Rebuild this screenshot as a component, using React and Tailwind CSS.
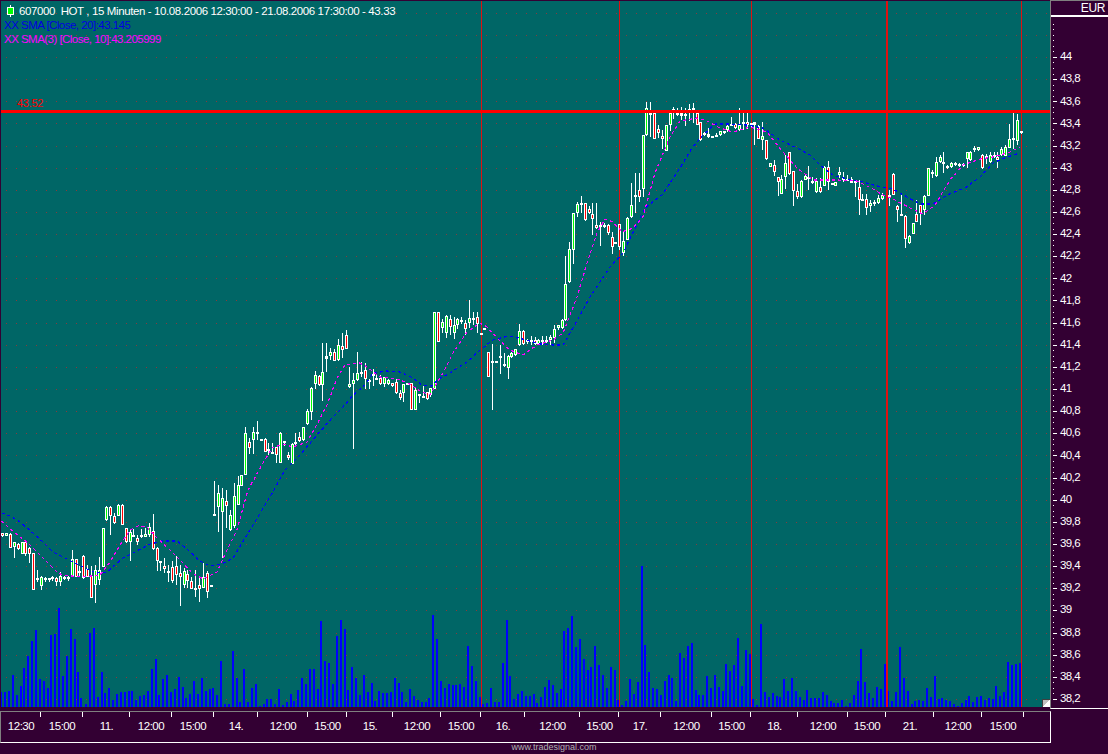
const CANDLE_SETS = [
  { x0: 0, y0: 490, items: [
    [7,128,130,137,142,'r'],[19,128,130,137,137,'g'],[31,130,132,173,173,'r'],[43,155,157,170,204,'g'],[55,160,163,177,180,'r'],[67,155,157,191,191,'g'],[76,155,157,191,198,'r'],[88,170,173,191,219,'r'],[100,190,190,301,301,'r'],[112,240,264,268,275,'w'],[124,257,261,288,300,'g'],[136,262,265,270,275,'w'],[148,263,265,270,276,'w'],[157,258,262,268,272,'w'],[169,262,265,275,288,'r'],[181,245,258,276,288,'g'],[193,258,260,264,270,'w'],[205,258,260,266,273,'g'],[217,180,208,260,262,'g'],[229,208,208,260,262,'r'],[238,228,243,245,258,'w'],[250,195,197,263,268,'r'],[262,225,238,260,262,'r'],[274,228,258,325,325,'r'],[286,225,241,284,338,'g'],[298,200,241,270,285,'g'],[310,115,115,230,232,'g'],[319,47,50,91,92,'g'],[331,47,50,79,135,'r'],[343,70,79,100,102,'r'],[355,42,44,77,77,'g'],[367,42,44,106,106,'r'],[379,113,115,157,160,'r'],[391,120,126,157,212,'g'],[400,117,135,139,142,'w'],[412,135,145,155,165,'r'],[424,117,135,142,145,'g'],[436,115,132,140,142,'g'],[448,100,110,135,140,'g'],[460,72,122,177,180,'r'],[472,172,175,212,242,'r'],[481,212,213,215,242,'w'],[493,205,229,238,248,'r'],[505,225,243,248,275,'w'],[517,212,232,272,280,'r'],[529,198,229,254,285,'r'],[541,225,250,262,347,'r'],[553,235,244,284,295,'g'],[562,240,252,274,295,'r'],[574,262,274,296,298,'r'],[586,240,294,299,320,'w'],[598,265,284,296,335,'r'],[610,220,262,293,295,'g'],[622,243,250,307,325,'r'],[634,285,285,287,287,'w'],[643,-28,72,73,73,'w'],[655,-15,8,50,125,'g'],[667,-5,25,65,205,'g'],[679,0,33,47,113,'r'],[691,60,75,120,122,'g'],[703,-21,18,107,113,'g'],
  ]},
  { x0: 200, y0: 320, items: [
    [115,467,495,555,555,'g'],[125,466,466,497,497,'g'],[137,322,340,466,466,'g'],[149,355,367,383,402,'r'],[160,322,337,359,402,'g'],[172,304,337,340,360,'w'],[184,358,358,364,364,'w'],[196,355,358,395,395,'r'],[205,370,388,390,405,'w'],[217,370,395,397,397,'w'],[229,380,382,404,428,'r'],[241,337,340,428,430,'g'],[253,362,362,370,378,'r'],[265,397,405,413,420,'r'],[277,370,372,433,433,'g'],[286,340,367,373,375,'g'],[298,337,352,362,365,'r'],[310,320,322,361,363,'g'],[322,268,273,312,316,'g'],[334,200,205,275,300,'g'],[346,153,165,191,208,'g'],[358,165,167,196,198,'r'],[367,70,157,196,242,'g'],[379,70,108,116,157,'w'],[391,85,97,107,120,'g'],[403,88,97,122,123,'r'],[415,58,76,121,123,'g'],[427,40,79,91,115,'r'],[439,30,44,88,88,'r'],[448,140,193,202,205,'g'],[460,160,179,191,386,'g'],[472,97,160,181,183,'g'],[484,127,155,158,170,'w'],[496,130,149,178,206,'r'],[508,178,180,182,206,'w'],[520,148,163,166,197,'w'],[529,163,175,177,178,'w'],[541,165,175,193,195,'r'],[553,170,172,193,200,'g'],[565,178,181,191,195,'g'],[577,188,190,199,200,'r'],[589,178,187,220,222,'r'],[601,210,220,233,240,'r'],[610,192,193,218,245,'g'],[622,190,190,193,195,'w'],[634,190,190,271,271,'r'],[646,200,211,271,271,'g'],[658,222,223,226,250,'w'],[670,197,229,232,235,'w'],[682,215,217,238,239,'r'],[691,205,205,221,225,'g'],
  ]},
  { x0: 430, y0: 190, items: [
    [2,595,595,615,620,'g'],[12,365,367,597,597,'g'],[25,365,367,457,457,'r'],[37,388,396,415,428,'g'],[49,376,378,428,445,'g'],[61,376,386,412,435,'r'],[73,382,404,430,448,'g'],[82,384,387,404,418,'g'],[94,382,391,397,403,'r'],[106,390,398,418,435,'r'],[118,330,385,399,413,'g'],[130,366,384,387,406,'w'],[142,366,382,402,428,'r'],[154,428,430,430,430,'w'],[163,415,415,415,415,'w'],[175,485,485,561,561,'r'],[187,462,513,515,660,'w'],[199,512,512,514,514,'w'],[211,465,497,501,551,'g'],[223,490,523,528,530,'r'],[235,495,497,535,566,'g'],[244,487,488,500,503,'g'],[256,478,478,494,497,'g'],[268,402,422,466,468,'g'],[280,420,422,462,465,'r'],[292,448,450,452,463,'w'],[304,438,450,452,465,'w'],[316,440,449,463,465,'r'],[325,448,450,461,463,'g'],[337,438,449,454,465,'r'],[349,438,449,451,458,'w'],[361,435,440,451,465,'g'],[373,405,416,444,460,'g'],[385,405,406,415,420,'g'],[397,387,389,415,416,'g'],[406,198,283,391,392,'g'],[418,157,176,277,278,'g'],[430,70,70,181,222,'g'],[442,35,41,70,82,'g'],[454,18,40,41,70,'w'],[466,38,40,91,92,'r'],[478,48,58,70,72,'r'],[487,40,73,88,135,'r'],[499,40,104,113,116,'r'],[511,95,105,111,167,'r'],[523,98,104,105,115,'w'],[535,103,104,130,136,'r'],[547,125,140,170,191,'r'],[556,155,157,157,157,'w'],[568,103,103,170,180,'r'],[580,125,154,188,198,'g'],[592,80,83,150,150,'g'],
  ]},
  { x0: 620, y0: 90, items: [
    [33,280,345,382,385,'g'],[46,250,314,318,368,'w'],[58,250,300,320,337,'r'],[70,135,135,297,320,'g'],[79,35,55,135,137,'g'],[91,35,60,75,140,'w'],[103,60,70,148,148,'r'],[115,105,118,130,145,'r'],[127,120,137,148,177,'r'],[139,105,105,182,182,'g'],[151,60,68,105,122,'g'],[160,50,58,70,87,'w'],[172,55,68,75,78,'w'],[184,50,70,78,90,'w'],[196,55,72,77,108,'w'],[208,42,58,70,92,'w'],[220,38,55,70,100,'w'],[232,70,70,104,104,'r'],[241,97,97,151,152,'r'],[253,125,128,133,137,'w'],[265,115,133,140,143,'w'],[277,137,137,139,139,'w'],[289,130,135,137,140,'w'],[301,122,124,136,137,'g'],[313,122,124,124,132,'w'],[322,100,107,120,125,'g'],[334,80,103,105,105,'w'],[346,100,103,115,118,'r'],[358,55,106,120,123,'g'],[370,70,97,103,120,'w'],[382,70,96,105,118,'r'],[394,100,100,104,115,'w'],[403,95,97,105,165,'w'],[415,105,107,146,147,'r'],[427,97,139,151,180,'g'],[439,150,150,208,210,'r'],[451,218,220,230,232,'g'],[463,210,226,245,258,'r'],[475,262,262,275,318,'r'],[484,255,266,311,313,'g'],[496,195,219,262,298,'g'],[508,185,187,253,255,'r'],[520,243,243,304,347,'r'],[532,283,304,322,327,'r'],[544,270,272,320,325,'g'],[556,252,259,269,270,'g'],[565,228,262,264,300,'w'],[577,262,272,280,283,'r'],[589,265,272,307,309,'g'],[601,265,291,306,310,'r'],[613,228,230,287,288,'g'],[625,212,230,276,300,'r'],[637,278,280,282,284,'w'],[646,275,277,287,288,'g'],[658,232,246,254,263,'g'],
  ]},
  { x0: 820, y0: 100, items: [
    [70,215,233,235,245,'w'],[82,225,237,240,240,'w'],[94,230,236,248,250,'w'],[106,240,242,248,292,'w'],[118,240,262,300,345,'r'],[127,282,296,300,300,'r'],[139,282,298,323,345,'r'],[151,300,310,318,335,'g'],[163,300,305,307,318,'w'],[175,285,295,308,312,'g'],[187,280,285,296,300,'g'],[208,270,284,286,318,'w'],[220,220,222,284,284,'r'],[232,315,318,329,365,'r'],[244,278,341,347,348,'g'],[256,345,347,418,445,'r'],[268,405,408,428,432,'g'],[280,370,370,401,402,'g'],[289,300,343,365,367,'r'],[301,315,316,340,375,'r'],[313,285,287,329,345,'g'],[325,205,205,287,288,'g'],[337,210,216,219,235,'w'],[349,170,187,229,231,'g'],[361,165,172,187,190,'g'],[370,155,187,190,220,'w'],[382,195,197,202,207,'g'],[394,185,190,202,204,'g'],[406,185,190,195,198,'g'],[418,190,191,199,200,'r'],[430,190,191,199,200,'r'],[442,155,157,177,205,'g'],[451,153,155,180,183,'g'],[463,138,143,146,155,'w'],[475,140,141,151,153,'g'],[487,163,164,205,206,'r'],[499,162,167,174,192,'g'],[511,155,166,187,188,'g'],[523,155,164,172,175,'r'],[532,155,170,181,203,'r'],[544,140,148,165,167,'g'],[556,135,141,167,168,'g'],[568,72,118,143,145,'g'],[580,40,115,121,147,'r'],[592,42,61,122,135,'g'],[604,93,94,100,101,'r'],
  ]},
];

const VOLUME_SETS = [
  { x0: 0, y0: 600, items: [[3,276],[14,276],[26,273],[38,225],[51,285],[62,258],[73,204],[84,168],[96,123],[108,90],[120,237],[132,243],[144,264],[153,105],[165,102],[177,24],[189,228],[201,168],[213,87],[225,117],[235,216],[244,294],[258,312],[270,98],[282,84],[294,291],[306,216],[315,279],[327,264],[339,300],[351,282],[363,276],[375,276],[387,273],[396,273],[408,300],[420,288],[432,285],[444,273],[456,207],[468,177],[477,285],[489,237],[501,225],[513,276],[525,267],[537,231],[549,261],[558,294],[570,282],[582,243],[594,282],[606,234],[618,273],[630,267],[639,264],[651,285],[663,183],[675,312],[687,312],[699,153],[711,234],[720,306],[732,207],[744,306],[756,264],[768,252]] },
  { x0: 256, y0: 560, items: [[12,438],[24,432],[33,417],[45,417],[57,432],[69,387],[81,435],[93,426],[105,402],[114,423],[126,390],[138,354],[150,372],[162,327],[174,327],[186,387],[195,183],[207,303],[219,309],[231,372],[243,228],[255,180],[267,207],[276,390],[288,321],[300,354],[312,405],[324,345],[336,396],[348,369],[357,423],[369,393],[381,399],[393,399],[405,396],[417,354],[429,369],[438,396],[450,426],[462,387],[474,408],[486,420],[498,426],[510,426],[519,414],[531,165],[543,237],[555,363],[567,384],[579,372],[591,375],[600,375],[612,372],[624,381],[636,258],[648,318],[660,363],[672,411],[681,432],[693,429],[705,384],[717,426],[729,426],[741,309],[753,180],[762,348],[774,417]] },
  { x0: 516, y0: 560, items: [[6,402],[18,393],[30,408],[42,408],[54,402],[63,429],[75,411],[87,381],[99,360],[111,375],[123,399],[135,387],[144,213],[156,204],[168,168],[180,261],[192,237],[204,297],[216,330],[225,321],[237,258],[249,315],[261,345],[273,384],[285,321],[297,330],[306,420],[318,435],[330,423],[342,357],[354,402],[366,366],[378,18],[387,255],[399,336],[411,384],[423,387],[435,405],[447,363],[459,345],[468,354],[480,423],[492,279],[504,294],[516,258],[528,249],[540,390],[549,405],[561,405],[573,348],[585,384],[597,345],[609,381],[621,393],[630,312],[642,333],[654,315],[666,234],[678,378],[690,270],[702,282],[711,417],[723,435],[735,192],[747,396],[759,411],[771,399]] },
  { x0: 776, y0: 560, items: [[3,408],[12,411],[24,357],[36,393],[48,354],[60,393],[72,411],[84,420],[93,390],[105,414],[117,414],[129,414],[141,396],[153,405],[165,423],[174,429],[186,429],[198,420],[210,438],[222,429],[234,405],[246,363],[255,267],[267,366],[279,399],[291,414],[303,381],[315,387],[327,312],[336,393],[348,423],[360,396],[372,261],[384,354],[396,393],[408,432],[417,423],[429,420],[441,423],[453,384],[465,411],[477,348],[489,417],[498,414],[510,420],[522,423],[534,432],[546,438],[558,429],[570,420],[579,408],[591,426],[603,411],[615,408],[627,420],[639,414],[651,417],[660,378],[672,408],[684,396],[696,306],[708,315],[720,312],[732,309]] },
];

const BLUE = '1.7,513 10,516 20,522 33,533 43,542 53,552 63,557 75,563 87,569 97,573 107,572 123,558 135,552 150,544 163,541 177,541 188,550 200,561 210,566 222,564 233,558 253,525 274,490 285,470 300,455 317,435 332,418 343,407 353,395 365,385 373,373 387,371 400,372 413,378 422,385 432,386 437,380 450,373 467,362 480,350 493,340 508,336 523,339 540,344 553,345 563,345 573,328 590,297 610,267 623,253 645,208 662,195 680,168 692,148 703,135 715,124 730,124 747,125 763,128 780,140 797,148 810,155 820,165 833,175 847,179 860,181 877,186 893,189 907,197 920,204 933,204 947,195 965,188 980,177 993,163 1007,157 1020,153';
const MAGENTA = '1.7,521 10,529 20,537 28,543 38,553 48,563 57,572 62,575 72,576 82,577 100,575 110,562 122,542 130,530 138,526 147,527 157,538 170,550 182,562 192,573 203,579 217,572 227,550 237,530 248,490 263,463 272,448 283,444 293,447 307,442 315,428 327,405 337,378 345,365 360,363 367,367 380,377 397,379 408,383 420,391 430,395 443,373 453,353 467,332 480,323 487,327 497,338 510,350 523,355 537,345 553,340 563,333 577,297 587,263 597,233 605,219 613,222 622,232 633,228 643,217 655,173 670,137 680,121 697,118 707,121 720,128 733,132 750,127 767,132 783,152 797,168 813,180 837,180 857,181 873,189 883,195 895,200 910,208 923,214 935,205 945,188 950,180 963,165 980,159 993,157 1010,152 1020,147';

const GRID_YS = Array.from({ length: 32 }, (_, k) => Math.round(699 - 22.14 * k));
const THIN_REDS = [481, 619, 751, 1021];
const PRICE_LABELS = ['44','43,8','43,6','43,4','43,2','43','42,8','42,6','42,4','42,2','42','41,8','41,6','41,4','41,2','41','40,8','40,6','40,4','40,2','40','39,8','39,6','39,4','39,2','39','38,8','38,6','38,4','38,2'];
const AXIS_CELLS = [
  ['12:30','w-[40px]'],['15:00','w-[42px]'],['11.','w-[47px]'],['12:00','w-[42px]'],['15:00','w-[42px]'],
  ['14.','w-[44px]'],['12:00','w-[50px]'],['15:00','w-[39px]'],
  ['15.','w-[46px]'],['12:00','w-[48px]'],['15:00','w-[40px]'],
  ['16.','w-[44px]'],['12:00','w-[55px]'],['15:00','w-[39px]'],
  ['17.','w-[42px]'],['12:00','w-[51px]'],['15:00','w-[39px]'],
  ['18.','w-[47px]'],['12:00','w-[50px]'],['15:00','w-[38px]'],
  ['21.','w-[48px]'],['12:00','w-[48px]'],['15:00','w-[42px]'],
];

function Candle({ x, wt, bt, bb, wb, c }) {
  const fill = c === 'r' ? '#ff0000' : c === 'g' ? '#00ff00' : '#ffffff';
  const h = Math.max(bb - bt, 2);
  return (
    <g>
      <rect x={x} y={wt} width="1" height={Math.max(wb - wt, 1)} fill="#ffffff" />
      <rect x={x - 1} y={bt} width="3" height={h} fill="#ffffff" />
      {h > 2 && <rect x={x} y={bt + 1} width="1" height={h - 2} fill={fill} />}
    </g>
  );
}

function Chart() {
  const candles = [];
  CANDLE_SETS.forEach((s) => s.items.forEach(([cx, a, b, d, e, c]) => {
    candles.push({
      x: Math.round(s.x0 + cx / 3 - 0.5),
      wt: Math.round(s.y0 + a / 3),
      bt: Math.round(s.y0 + b / 3),
      bb: Math.round(s.y0 + d / 3),
      wb: Math.round(s.y0 + e / 3),
      c,
    });
  }));
  const bars = [];
  VOLUME_SETS.forEach((s) => s.items.forEach(([cx, top]) => {
    bars.push({ x: Math.round(s.x0 + cx / 3 - 1), y: Math.round(s.y0 + top / 3) });
  }));
  return (
    <svg className="block w-full h-full" viewBox="1 1 1049 706" shapeRendering="crispEdges">
      {GRID_YS.map((y) => (
        <line key={y} x1="6" x2="1050" y1={y + 0.5} y2={y + 0.5} stroke="#8a3a3a" strokeWidth="1" strokeDasharray="1 9" />
      ))}
      {bars.map((b, i) => (
        <rect key={i} x={b.x} y={b.y} width="2" height={707 - b.y} fill="#0000ff" />
      ))}
      {THIN_REDS.map((x) => (
        <rect key={x} x={x} y="1" width="1" height="706" fill="#e01010" />
      ))}
      {candles.map((c, i) => <Candle key={i} {...c} />)}
      <polyline points={BLUE} fill="none" stroke="#0000ff" strokeWidth="1.2" strokeDasharray="3 3" />
      <polyline points={MAGENTA} fill="none" stroke="#ff00ff" strokeWidth="1.2" strokeDasharray="3 3" />
      <rect x="1" y="110" width="1049" height="3" fill="#ff0000" />
      <rect x="886" y="1" width="2" height="706" fill="#e01010" />
    </svg>
  );
}

function Legend() {
  return (
    <div className="absolute left-[3px] top-[3px] flex flex-col text-[11.5px] leading-[14px] whitespace-pre">
      <div className="flex items-center gap-[3px] pl-[2px] text-white tracking-[-0.39px]">
        <svg width="10" height="14" viewBox="0 0 10 14" shapeRendering="crispEdges">
          <rect x="4" y="1" width="1" height="12" fill="#ffffff" />
          <rect x="1" y="3" width="7" height="8" fill="#ffffff" />
          <rect x="2" y="4" width="5" height="6" fill="#00ff00" />
        </svg>
        <span>607000  HOT , 15 Minuten - 10.08.2006 12:30:00 - 21.08.2006 17:30:00 - 43.33</span>
      </div>
      <div className="text-[#0000e0] tracking-[-0.52px]">XX SMA [Close, 20]:43.145</div>
      <div className="text-[#ff00ff] tracking-[-0.53px]">XX SMA(3) [Close, 10]:43.205999</div>
    </div>
  );
}

function YAxis() {
  const minor = Array.from({ length: 125 }, (_, k) => 699 - 5.535 * k).filter((y) => y > 22);
  return (
    <div className="flex-1 flex flex-col border-t border-l border-b border-t-[#808080] border-l-[#808080] border-b-white text-white overflow-hidden">
      <div className="h-[16px] shrink-0 flex items-center justify-end pr-[3px] border-b-2 border-white text-[12px] leading-none tracking-[-0.4px]">EUR</div>
      <div className="flex-1 flex min-h-0">
        <svg className="block w-[7px] h-[691px] shrink-0" viewBox="1051 17 7 691" preserveAspectRatio="xMinYMin" shapeRendering="crispEdges">
          {minor.map((y, i) => (
            <rect key={i} x="1053" y={Math.round(y)} width="1" height="1" fill="#ffffff" />
          ))}
          {PRICE_LABELS.map((_, k) => (
            <rect key={k} x="1053" y={Math.round(699 - 22.14 * k)} width="4" height="1" fill="#ffffff" />
          ))}
        </svg>
        <div className="flex flex-col pt-[29px] pl-[2px] text-[11.5px] tracking-[-0.6px]">
          {PRICE_LABELS.map((t) => (
            <div key={t} className="h-[22.14px] shrink-0 flex items-center leading-none">{t}</div>
          ))}
        </div>
      </div>
    </div>
  );
}

function XAxis() {
  return (
    <div className="mt-[2px] w-[1051px] h-[32px] flex items-stretch border-t border-l border-b border-r border-t-[#808080] border-l-[#808080] border-b-white border-r-white text-white text-[11.5px] tracking-[-0.5px]">
      {AXIS_CELLS.map(([t, w], i) => (
        <div key={i} className={`relative flex justify-center pt-[7px] leading-[14px] ${w}`}>
          <span>{t}</span>
          <span className="absolute right-0 top-0 w-px h-[5px] bg-white" />
        </div>
      ))}
    </div>
  );
}

export default function App() {
  return (
    <div className="w-[1108px] h-[754px] overflow-hidden bg-[#330033] flex flex-col font-['Liberation_Sans',Arial,sans-serif]">
      <div className="flex h-[709px]">
        <div className="relative ml-px mt-px w-[1049px] h-[706px] bg-[#006666]">
          <Chart />
          <Legend />
          <div className="absolute left-[16px] top-[95px] text-[11px] leading-[14px] tracking-[-0.3px] text-[#ff0000]">43.52</div>
          <svg className="absolute right-0 bottom-0" width="8" height="8" viewBox="0 0 8 8" shapeRendering="crispEdges">
            <rect width="8" height="8" fill="#c0c0c0" />
            <polygon points="8,0 8,8 0,8" fill="#ffffff" />
            <rect x="0" y="0" width="8" height="1" fill="#404040" />
            <rect x="0" y="0" width="1" height="8" fill="#404040" />
          </svg>
        </div>
        <YAxis />
      </div>
      <XAxis />
      <div className="flex-1 flex items-center justify-center pb-[2px] text-[9px] leading-none text-[#b0b0b0]">www.tradesignal.com</div>
    </div>
  );
}
